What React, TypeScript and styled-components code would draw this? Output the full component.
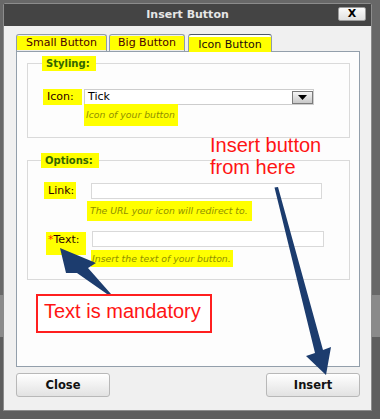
import React from "react";
import styled, { createGlobalStyle } from "styled-components";

const Global = createGlobalStyle`
  html, body { margin: 0; padding: 0; background: #5f5f5f; }
  body { width: 380px; height: 419px; overflow: hidden; font-family: "DejaVu Sans", Verdana, sans-serif; }
  * { box-sizing: border-box; }
`;

const Screen = styled.div`
  position: relative;
  width: 380px;
  height: 419px;
  padding: 3px 0 0 3px;
  background: linear-gradient(
    to bottom,
    #686868 0,
    #686868 295px,
    #8a8a8a 295px,
    #8a8a8a 337px,
    #5e5e5e 337px
  );
`;

const Dialog = styled.div`
  width: 369px;
  height: 408px;
  border: 1px solid #8c8c8c;
  border-radius: 3px 3px 0 0;
  background: #f0f0f0;
  display: flex;
  flex-direction: column;
`;

const TitleBar = styled.div`
  height: 22px;
  background: #444444;
  display: grid;
  grid-template-columns: 1fr auto 1fr;
  align-items: start;
`;

const Title = styled.div`
  grid-column: 2;
  font: bold 11px/22px "DejaVu Sans", Verdana, sans-serif;
  color: #e6e6e6;
`;

const CloseX = styled.button`
  grid-column: 3;
  justify-self: end;
  margin: 3px 5px 0 0;
  width: 28px;
  height: 14px;
  padding: 0;
  border: 1px solid #9c9c9c;
  border-radius: 2px;
  background: linear-gradient(#fbfbfb, #e0e0e0);
  font: bold 11px/12px "DejaVu Sans", Verdana, sans-serif;
  color: #000;
`;

const Body = styled.div`
  flex: 1;
  padding: 8px 11px 13px 12px;
  display: flex;
  flex-direction: column;
`;

const TabRow = styled.div`
  display: flex;
  align-items: flex-start;
  height: 17px;
  gap: 2px;
  position: relative;
  z-index: 1;
`;

const Tab = styled.div<{ $w: number; $active?: boolean; $ml?: number }>`
  width: ${(p) => p.$w}px;
  height: ${(p) => (p.$active ? 18 : 17)}px;
  margin-left: ${(p) => p.$ml ?? 0}px;
  border: 1px solid #8f9ca8;
  border-bottom: none;
  border-top-color: ${(p) => (p.$active ? "#4d5a68" : "#8f9ca8")};
  border-radius: 3px 3px 0 0;
  background: ${(p) => (p.$active ? "#ffffff" : "#ececec")};
`;

const TabLabel = styled.span<{ $active?: boolean }>`
  display: block;
  margin-top: ${(p) => (p.$active ? 2 : 1)}px;
  height: ${(p) => (p.$active ? 15 : 14)}px;
  background: #ffff00;
  text-align: center;
  font: 11px/${(p) => (p.$active ? 15 : 14)}px "DejaVu Sans", Verdana, sans-serif;
  color: ${(p) => (p.$active ? "#1a0a0a" : "#4a0000")};
`;

const Panel = styled.div`
  height: 316px;
  border: 1px solid #939fab;
  background: #fdfdfd;
  padding: 4px 9px 0 10px;
`;

const Group = styled.fieldset<{ $mt: number; $pb: number }>`
  margin: ${(p) => p.$mt}px 0 0 0;
  padding: 0 0 ${(p) => p.$pb}px 0;
  border: 1px solid #dadada;
  min-width: 0;
`;

const Legend = styled.legend<{ $pr: number; $ml: number }>`
  margin-left: ${(p) => p.$ml}px;
  padding: 0 ${(p) => p.$pr}px 0 4px;
  background: #ffff00;
  font: bold 10px/15px "DejaVu Sans", Verdana, sans-serif;
  color: #336600;
`;

const Row = styled.div<{ $col: number; $mt: number }>`
  display: grid;
  grid-template-columns: ${(p) => p.$col}px auto;
  align-items: start;
  margin-top: ${(p) => p.$mt}px;
`;

const Label = styled.label<{
  $ml: number;
  $w: number;
  $h: number;
  $lh: number;
  $pl: number;
  $mt?: number;
}>`
  display: block;
  margin: ${(p) => p.$mt ?? 0}px 0 0 ${(p) => p.$ml}px;
  width: ${(p) => p.$w}px;
  height: ${(p) => p.$h}px;
  padding-left: ${(p) => p.$pl}px;
  background: #ffff00;
  font: 11px/${(p) => p.$lh}px "DejaVu Sans", Verdana, sans-serif;
  color: #2a0000;
  white-space: nowrap;
`;

const Star = styled.span`
  color: #ff2a00;
`;

const FieldStack = styled.div<{ $mt?: number }>`
  display: flex;
  flex-direction: column;
  align-items: flex-start;
  margin-top: ${(p) => p.$mt ?? 0}px;
`;

const Hint = styled.span<{ $mt: number; $ml: number; $h: number; $pl: number; $pr: number }>`
  display: block;
  margin: ${(p) => p.$mt}px 0 0 ${(p) => p.$ml}px;
  height: ${(p) => p.$h}px;
  padding: 0 ${(p) => p.$pr}px 0 ${(p) => p.$pl}px;
  background: #ffff00;
  font: italic 9.3px/${(p) => p.$h}px "DejaVu Sans", Verdana, sans-serif;
  color: #8f8f00;
  white-space: nowrap;
`;

const SelectBox = styled.div`
  width: 230px;
  height: 16px;
  border: 1px solid #cdcdcd;
  background: #fff;
  display: flex;
  align-items: center;
  justify-content: space-between;
  padding-left: 3px;
  font: 11px/14px "DejaVu Sans", Verdana, sans-serif;
  color: #000;
`;

const DropButton = styled.span`
  width: 21px;
  height: 13px;
  border: 1px solid #7b7b7b;
  background: linear-gradient(#f6f6f6, #c8c8c8);
  display: flex;
  align-items: center;
  justify-content: center;
`;

const TextField = styled.input<{ $w: number }>`
  width: ${(p) => p.$w}px;
  height: 16px;
  border: 1px solid #d9d9d9;
  background: #fff;
  padding: 0;
  margin: 0;
  outline: none;
`;

const Footer = styled.div`
  display: flex;
  justify-content: space-between;
  margin-top: 6px;
`;

const Btn = styled.button`
  width: 94px;
  height: 24px;
  padding: 0;
  border: 1px solid #b8b8b8;
  border-radius: 3px;
  background: linear-gradient(#ffffff, #e2e2e2);
  font: bold 11.5px/22px "DejaVu Sans", Verdana, sans-serif;
  color: #111;
`;

const Overlay = styled.div`
  position: absolute;
  inset: 0;
  pointer-events: none;
`;

const Callout = styled.div`
  position: absolute;
  left: 210px;
  top: 134px;
  font: 20px/22px "Liberation Sans", Arial, sans-serif;
  color: #ff1414;
  white-space: nowrap;
`;

const NoteBox = styled.div`
  position: absolute;
  left: 36px;
  top: 294px;
  width: 176px;
  height: 39px;
  border: 2px solid #ff1f1f;
  background: #ffffff;
  padding: 4px 0 0 6px;
  font: 20px/22px "Liberation Sans", Arial, sans-serif;
  color: #ff1414;
  white-space: nowrap;
`;

const Arrows = styled.svg`
  position: absolute;
  left: 0;
  top: 0;
`;

export default function App() {
  return (
    <Screen>
      <Global />
      <Dialog>
        <TitleBar>
          <Title>Insert Button</Title>
          <CloseX>X</CloseX>
        </TitleBar>
        <Body>
          <TabRow>
            <Tab $w={91}>
              <TabLabel>Small Button</TabLabel>
            </Tab>
            <Tab $w={76}>
              <TabLabel>Big Button</TabLabel>
            </Tab>
            <Tab $w={84} $ml={1} $active>
              <TabLabel $active>Icon Button</TabLabel>
            </Tab>
          </TabRow>
          <Panel>
            <Group $mt={0} $pb={11}>
              <Legend $ml={14} $pr={6}>Styling:</Legend>
              <Row $col={56} $mt={18}>
                <Label $ml={15} $w={39} $h={16} $lh={16} $pl={4}>
                  Icon:
                </Label>
                <FieldStack>
                  <SelectBox>
                    <span>Tick</span>
                    <DropButton>
                      <svg width="9" height="5" viewBox="0 0 9 5">
                        <polygon points="0,0 9,0 4.5,5" fill="#000" />
                      </svg>
                    </DropButton>
                  </SelectBox>
                  <Hint $mt={-1} $ml={0} $h={22} $pl={2} $pr={3}>
                    Icon of your button
                  </Hint>
                </FieldStack>
              </Row>
            </Group>
            <Group $mt={15} $pb={12}>
              <Legend $ml={13} $pr={6}>Options:</Legend>
              <Row $col={63} $mt={14}>
                <Label $ml={16} $w={32} $h={17} $lh={17} $pl={4}>
                  Link:
                </Label>
                <FieldStack $mt={1}>
                  <TextField $w={231} />
                  <Hint $mt={2} $ml={-4} $h={20} $pl={3} $pr={4}>
                    The URL your icon will redirect to.
                  </Hint>
                </FieldStack>
              </Row>
              <Row $col={64} $mt={10}>
                <Label $ml={18} $w={40} $h={23} $lh={15} $pl={2} $mt={1}>
                  <Star>*</Star>Text:
                </Label>
                <FieldStack>
                  <TextField $w={232} />
                  <Hint $mt={3} $ml={-1} $h={17} $pl={1} $pr={2}>
                    Insert the text of your button.
                  </Hint>
                </FieldStack>
              </Row>
            </Group>
          </Panel>
          <Footer>
            <Btn>Close</Btn>
            <Btn>Insert</Btn>
          </Footer>
        </Body>
      </Dialog>
      <Overlay>
        <Callout>
          Insert button
          <br />
          from here
        </Callout>
        <NoteBox>Text is mandatory</NoteBox>
        <Arrows width="380" height="419" viewBox="0 0 380 419">
          <polygon
            points="60,248 96,263 88,268 111,294 107,294 77,273 66,273"
            fill="#1c3c6e"
          />
          <polygon
            points="274.5,187.5 278,187 323,350 331,347 326,375 306,356 315,353"
            fill="#1c3c6e"
          />
        </Arrows>
      </Overlay>
    </Screen>
  );
}
